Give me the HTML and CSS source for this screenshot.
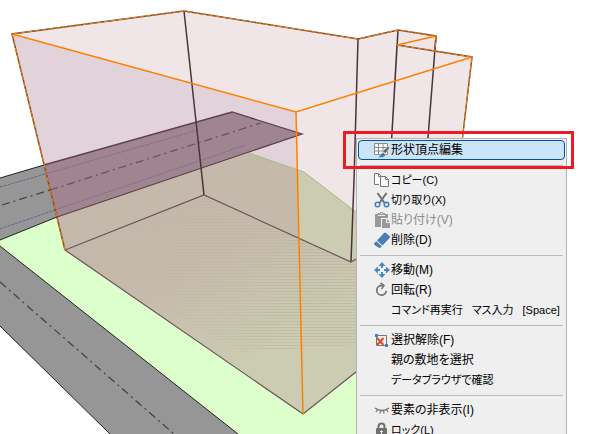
FILE: index.html
```html
<!DOCTYPE html>
<html lang="ja">
<head>
    <meta charset="UTF-8">
    <meta name="viewport" content="width=device-width, initial-scale=1.0">
    <title>形状頂点編集</title>
    <link rel="stylesheet" href="styles.css">
</head>
<body>

    <!-- 3D view -->
    <svg class="scene" viewBox="0 0 606 434" preserveAspectRatio="xMinYMin slice" aria-hidden="true">
        <defs>
            <linearGradient id="floor" gradientUnits="userSpaceOnUse" x1="150" y1="220" x2="245" y2="385">
                <stop offset="0" stop-color="#c4b8aa"/>
                <stop offset="0.3" stop-color="#c5baab"/>
                <stop offset="0.9" stop-color="#cbccb1"/>
            </linearGradient>
            <linearGradient id="hatchFade" gradientUnits="userSpaceOnUse" x1="110" y1="0" x2="300" y2="0">
                <stop offset="0" stop-color="#000"/>
                <stop offset="1" stop-color="#fff"/>
            </linearGradient>
            <mask id="fade"><rect width="606" height="434" fill="url(#hatchFade)"/></mask>
            <pattern id="hatch" width="8" height="3" patternUnits="userSpaceOnUse">
                <rect width="8" height="1" fill="#b9ad98"/>
            </pattern>
        </defs>

        <!-- Site -->
        <path fill="#dcffcc" d="M0 240 57 217 249 153 304 172 356 212 420 262V434H238L0 246z"/>

        <!-- Building faces -->
        <path fill="#f0e6e8" d="M12 34 184 11 358 39 398 30 436 36 435 51 472 57 440 290 303 414 65 250z"/>
        <path fill="#e2d3da" d="M12 34 296 112 303 414 65 250z"/>
        <path fill="#c4b9aa" d="M57 217 249 153 297 170 303 414 65 250z"/>
        <path fill="#cbccb1" d="M297 170 304 172 356 212V372L303 414z"/>
        <path fill="url(#floor)" d="M65 250 204 195 351 262 356 260V372L303 414z"/>
        <path fill="url(#hatch)" opacity="0.45" mask="url(#fade)" d="M65 250 204 195 351 262 356 260V345L240 352z"/>
        <path class="site-edge" d="M249 153 304 172 356 212"/>

        <!-- Roads -->
        <path fill="#969696" d="M0 178 44 165 57 217 0 240z"/>
        <path fill="#a0848f" d="M44 165 232 112 302 134 57 217z"/>
        <path fill="#969696" d="M0 246 238 434H110L0 326z"/>
        <path class="road-edge" d="M0 178 44 165M0 240 57 217M0 246 238 434M0 326 110 434"/>
        <path class="inner-edge" d="M44 165 232 112 302 134 57 217"/>
        <path class="lane" d="M0 187 45 174M0 229 55 210"/>
        <path class="lane lane-inner" d="M45 174 198 130M55 210 246 145"/>
        <path class="center" d="M2 205 50 190"/>
        <path class="center center-inner" d="M50 190 261 123"/>
        <path class="center" d="M0 282 174 434"/>

        <!-- Building edges -->
        <path class="edge" d="M184 11 204 195M358 39 354 180 351 262M398 30 391 150M397 45 391 150M436 36 427 150"/>
        <path class="edge-thin" d="M65 250 204 195 351 262 356 259M65 250 303 414 356 372"/>
        <path class="edge-back" d="M65 250 12 34 184 11 358 39 398 30 436 36 435 51M397 45 472 57 461 150"/>
        <path class="select select-dash" d="M65 250 12 34 184 11 358 39 398 30 436 36 435 51M397 45 472 57 461 150"/>
        <path class="select" d="M12 34 296 112 472 57M397 45 436 36M296 112 303 414"/>
    </svg>

    <!-- Context menu -->
    <nav class="menu">
        <button class="item active">
            <svg class="icon" viewBox="0 0 16 16">
                <path d="M.5 1.500h13v11H.5z" fill="#fff"/>
                <path d="M.5 1.500h13v11H.5zM.5 5.500h13M.5 9h13M4.500 1.500v11M9 1.500v11" fill="none" stroke="#8a8a8a"/>
                <path d="M13.500 5q2-1 2 1l-4 5.500-3-2z" fill="#606060" stroke="#e4eff9" stroke-width=".6"/>
                <path d="M3 15.500q3.500-1.500 4-4 2.500-1.500 4 0 1 2.500-1 3.500-3 1-7 .5z" fill="#3c74b4" stroke="#e4eff9" stroke-width=".6"/>
            </svg>
            <span>形状頂点編集</span>
        </button>
        <hr class="line">
        <button class="item compact">
            <svg class="icon" viewBox="0 0 16 16">
                <path d="M5 12.500H.5v-11h4l3 3M4.500 1.500v3h3" fill="#fff" stroke="#777"/>
                <path d="M6.500 4.500h5l3 3v7h-8zM11.500 4.500v3h3" fill="#fff" stroke="#777"/>
            </svg>
            <span>コピー(C)</span>
        </button>
        <button class="item compact">
            <svg class="icon" viewBox="0 0 16 16">
                <path d="M3.500 1 10.500 11M12.500 1 5.500 11" fill="none" stroke="#707070" stroke-width="2"/>
                <circle cx="3.500" cy="12.500" r="2.300" fill="none" stroke="#4580be" stroke-width="1.500"/>
                <circle cx="12.500" cy="12.500" r="2.300" fill="none" stroke="#4580be" stroke-width="1.500"/>
            </svg>
            <span>切り取り(X)</span>
        </button>
        <button class="item" disabled>
            <svg class="icon" viewBox="0 0 16 16">
                <path d="M1 2h3V1h2V0h3v1h2v1h3v4H7v9H1z" fill="#999"/>
                <path d="M4 3.500h7M6.500 1.500h2" stroke="#efefef"/>
                <path d="M8 7h5l3 3v6H8z" fill="#999"/>
                <path d="M12.500 7v3.500H16" fill="none" stroke="#efefef"/>
            </svg>
            <span>貼り付け(V)</span>
        </button>
        <button class="item">
            <svg class="icon" viewBox="0 0 16 16">
                <path d="M10 1q1-1 2 0l3.500 3q1 1 0 2l-7 7.500-5.500-5zM2.300 9.200l5.500 5-1 1.300q-1 .8-2 .3L.5 13q-1-1 0-2z" fill="#4a7eb5"/>
            </svg>
            <span>削除(D)</span>
        </button>
        <hr class="line">
        <button class="item">
            <svg class="icon" viewBox="0 0 16 16">
                <path d="m8 0 3.500 4H9v3H7V4H4.500zM8 16l3.500-4H9V9H7v3H4.500zM0 8l4-3.500V7h3v2H4v2.500zM16 8l-4-3.500V7H9v2h3v2.500z" fill="#4a86c0"/>
                <path d="M6 6h4v4H6z" fill="#efefef"/>
            </svg>
            <span>移動(M)</span>
        </button>
        <button class="item">
            <svg class="icon" viewBox="0 0 16 16">
                <path d="M9.500 3.500H7.500a4.800 4.800 0 1 0 4.800 5.500" fill="none" stroke="#757575" stroke-width="1.800"/>
                <path d="M6.500.8 10 3.700 7.500 7" fill="none" stroke="#757575" stroke-width="1.500"/>
            </svg>
            <span>回転(R)</span>
        </button>
        <button class="item compact">
            <span class="icon"></span>
            <span class="command">
                <span>コマンド再実行</span>
                <span>マス入力</span>
                <span>[Space]</span>
            </span>
        </button>
        <hr class="line">
        <button class="item">
            <svg class="icon" viewBox="0 0 16 16">
                <path d="M2.500 3.500h10v10h-10z" fill="none" stroke="#777"/>
                <path d="m3 6 6.500 7M9.500 6 3 13" stroke="#df4b2b" stroke-width="2"/>
                <path d="M1 2h3v3H1zM11 12h3v3h-3z" fill="#4580be"/>
            </svg>
            <span>選択解除(F)</span>
        </button>
        <button class="item">
            <span class="icon"></span>
            <span>親の敷地を選択</span>
        </button>
        <button class="item compact">
            <span class="icon"></span>
            <span>データブラウザで確認</span>
        </button>
        <hr class="line">
        <button class="item">
            <svg class="icon" viewBox="0 0 16 16">
                <path d="M1 6q7 5 14 0M3.500 7.500 2 10M6.500 8.500l-.5 3M9.500 8.500l.5 3M12.500 7.500 14 10" fill="none" stroke="#777" stroke-width="1.300"/>
            </svg>
            <span>要素の非表示(I)</span>
        </button>
        <button class="item compact">
            <svg class="icon" viewBox="0 0 16 16">
                <path d="M4.500 7V4.500a3 3 0 0 1 6 0V7" fill="none" stroke="#707070" stroke-width="2"/>
                <rect x="2" y="6" width="11" height="9" rx="1" fill="#707070"/>
                <path d="M7.500 8.500v4M6 9.500h3" stroke="#efefef"/>
            </svg>
            <span>ロック(L)</span>
        </button>
    </nav>

    <!-- Red frame around the first command -->
    <div class="mark"></div>

</body>
</html>
```

FILE: styles.css
```css
body, html {
    height: 100%;
    margin: 0;
    overflow: hidden;
    background: #fff;
}

body {
    position: relative;
    font-family: "Liberation Sans", "Noto Sans CJK JP", sans-serif;
    font-size: 12px;
    color: #000;
}

.scene {
    display: block;
    width: 100%;
    height: 100%;
}

/* Scene lines */
.scene path[class] { fill: none; }
.site-edge { stroke: #a0bd7c; stroke-width: 1; }
.road-edge { stroke: #1c241c; stroke-width: 1; }
.inner-edge { stroke: #5c424e; stroke-width: 1.3px; }
.lane { stroke: #565b86; stroke-width: 1; stroke-dasharray: 3 1; opacity: 0.8; }
.lane-inner { stroke: #7c6684; }
.center { stroke: #444; stroke-width: 1.3px; stroke-dasharray: 8 4 2 4; }
.center-inner { stroke: #6b5360; }
.edge { stroke: #4b333c; stroke-width: 1.5px; }
.edge-thin { stroke: #6a5359; stroke-width: 1.2px; }
.edge-back { stroke: #6b4a3c; stroke-width: 1.5px; }
.select { stroke: #ff8000; stroke-width: 1.5px; }
.select-dash { stroke-width: 1; stroke-dasharray: 5 2; }

/* Context menu */
.menu {
    position: absolute;
    left: 356px;
    top: 138px;
    box-sizing: border-box;
    min-width: 211px;
    padding: 1px;
    border: 1px solid #b4b4b4;
    background: #efefef;
}

.item {
    display: flex;
    align-items: center;
    gap: 1px;
    box-sizing: border-box;
    width: 100%;
    height: 20px;
    padding: 0 4px 0 15px;
    border: 1px solid transparent;
    border-radius: 4px;
    background: none;
    color: #000;
    font-family: inherit;
    font-size: 12px;
    font-feature-settings: "palt";
    line-height: 18px;
    text-align: left;
    white-space: nowrap;
}

.item:hover,
.item.active {
    border-color: #005499;
    background: #cce4f7;
}

.item:disabled {
    color: #8c8c8c;
}

.item.compact {
    font-size: 11px;
}

.command {
    display: flex;
    gap: 9px;
}

.icon {
    flex: none;
    width: 16px;
    height: 16px;
}

.line {
    height: 1px;
    margin: 5px 2px 4px;
    border: 0;
    background: #bababa;
}

.mark {
    position: absolute;
    left: 343px;
    top: 131px;
    box-sizing: border-box;
    width: 231px;
    height: 38px;
    border: 3px solid #ed1c24;
    pointer-events: none;
}
```
